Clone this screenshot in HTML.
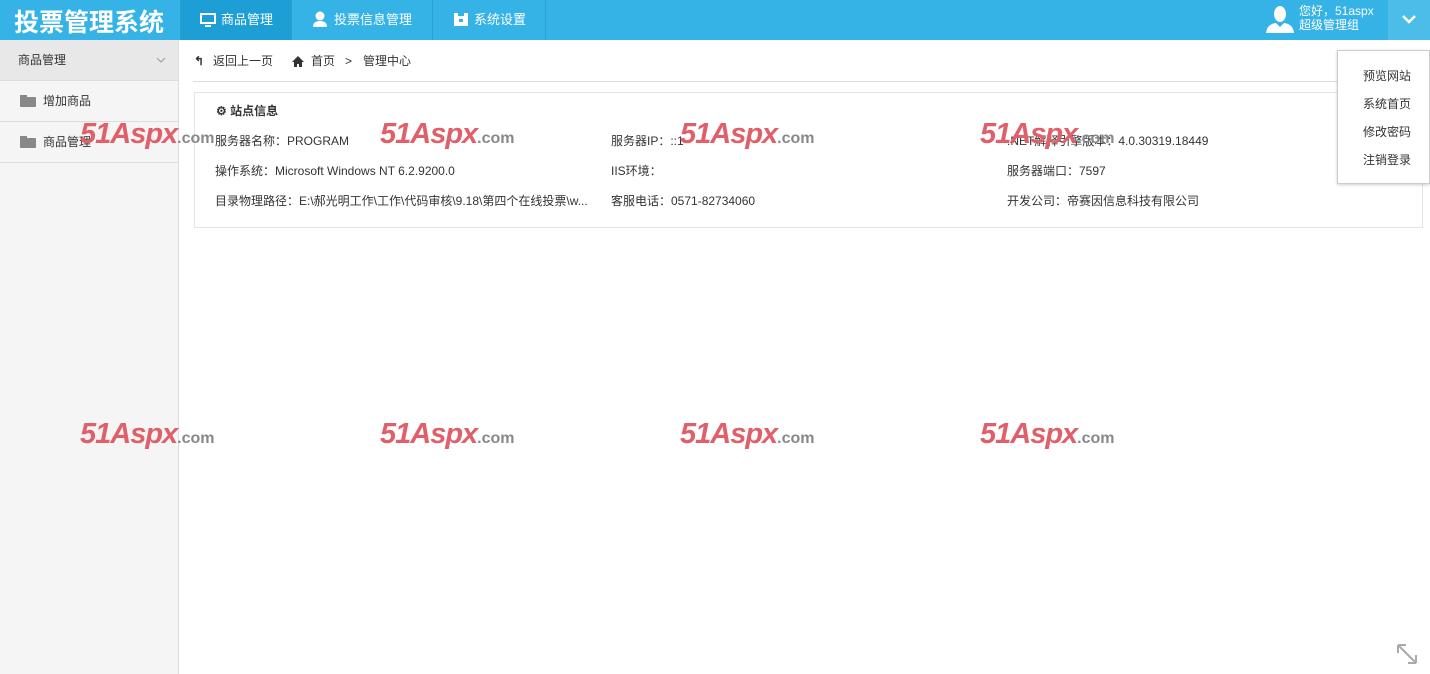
<!DOCTYPE html><html><head><meta charset="utf-8"><style>
*{margin:0;padding:0;box-sizing:border-box}
body{width:1430px;height:674px;overflow:hidden;font-family:"Liberation Sans","Noto Sans CJK SC",sans-serif;font-size:12px;color:#333;background:#fff;position:relative}
.top{position:absolute;left:0;top:0;width:1430px;height:40px;background:#35b3e6}
.logo{position:absolute;left:14px;top:3px;color:#fff;font-size:25px;font-weight:bold}
.tab{position:absolute;top:0;height:40px;color:#fff;font-size:13px;line-height:40px;border-right:1px solid #2aa0d2}
.side{position:absolute;left:0;top:40px;width:179px;height:634px;background:#f5f5f5;border-right:1px solid #ddd}
.sh{height:41px;background:#e8e8e8;border-bottom:1px solid #ddd;line-height:40px;padding-left:18px;position:relative}
.si{height:41px;border-bottom:1px solid #ddd;line-height:40px;padding-left:43px;position:relative}
.fold{position:absolute;left:20px;top:16px;width:16px;height:10px;background:#888;border-radius:1px}
.fold:before{content:"";position:absolute;left:0;top:-2px;width:7px;height:3px;background:#888}
.bc{position:absolute;left:193px;top:40px;width:1237px;height:42px;border-bottom:1px solid #ddd;line-height:42px}
.box{position:absolute;left:194px;top:92px;width:1229px;height:136px;border:1px solid #e5e5e5}
.t{position:absolute;white-space:nowrap}
.wm{position:absolute;font-size:29px;font-weight:bold;font-style:italic;color:#e0606a;white-space:nowrap;letter-spacing:-1px}
.wm span{font-size:16px;color:#888;font-style:normal;letter-spacing:0}
.menu{position:absolute;left:1337px;top:50px;width:93px;height:134px;background:#fff;border:1px solid #ccc;box-shadow:0 1px 3px rgba(0,0,0,.2)}
.menu div{position:absolute;left:25px}
</style></head><body>
<div class="top">
<div class="logo">投票管理系统</div>
<div class="tab" style="left:180px;width:112px;background:#1d9fd6;border-left:1px solid #2aa0d2;padding-left:40px"><svg style="position:absolute;left:19px;top:12px" width="16" height="16"><rect x="1" y="2" width="14" height="9" fill="none" stroke="#fff" stroke-width="2"/><rect x="5" y="13" width="6" height="2" fill="#fff"/></svg>商品管理</div>
<div class="tab" style="left:292px;width:141px;padding-left:42px"><svg style="position:absolute;left:20px;top:11px" width="16" height="17"><circle cx="8" cy="5" r="4.5" fill="#fff"/><path d="M1 16q0-6 7-6t7 6z" fill="#fff"/></svg>投票信息管理</div>
<div class="tab" style="left:433px;width:113px;padding-left:41px"><svg style="position:absolute;left:20px;top:12px" width="16" height="15"><path d="M1 1h4v3h6v-3h4v13h-14z" fill="#fff"/><rect x="6" y="7" width="4" height="3" fill="#35b3e6"/></svg>系统设置</div>
<svg style="position:absolute;left:1265px;top:4px" width="30" height="30"><ellipse cx="15" cy="10" rx="6" ry="8" fill="#fff"/><path d="M1 29q1-9 10-10l4 4 4-4q9 1 10 10z" fill="#fff"/></svg>
<div class="t" style="left:1299px;top:4px;color:#fff;font-size:12px;line-height:14px">您好，51aspx<br>超级管理组</div>
<div style="position:absolute;left:1388px;top:0;width:42px;height:40px;background:#4cbde9"><svg style="position:absolute;left:13px;top:13px" width="16" height="12"><path d="M2 3l6 6 6-6" fill="none" stroke="#fff" stroke-width="2.5"/></svg></div>
</div>
<div class="side">
<div class="sh">商品管理<svg style="position:absolute;left:156px;top:17px" width="10" height="7"><path d="M1 1l4 4 4-4" fill="none" stroke="#999"/></svg></div>
<div class="si"><i class="fold"></i>增加商品</div>
<div class="si"><i class="fold"></i>商品管理</div>
</div>
<div class="bc"><span style="position:absolute;left:1px;font-weight:bold">↰</span><span style="position:absolute;left:20px">返回上一页</span><svg style="position:absolute;left:99px;top:16px" width="12" height="11"><path d="M6 0l6 6h-2v5h-3v-3h-2v3h-3v-5h-2z" fill="#333"/></svg><span style="position:absolute;left:118px">首页</span><span style="position:absolute;left:152px">&gt;</span><span style="position:absolute;left:170px">管理中心</span></div>
<div class="box">
<div class="t" style="left:21px;top:9px;font-weight:bold">⚙ 站点信息</div>
<div class="t" style="left:20px;top:39px">服务器名称：PROGRAM</div>
<div class="t" style="left:20px;top:69px">操作系统：Microsoft Windows NT 6.2.9200.0</div>
<div class="t" style="left:20px;top:99px">目录物理路径：E:\郝光明工作\工作\代码审核\9.18\第四个在线投票\w...</div>
<div class="t" style="left:416px;top:39px">服务器IP：::1</div>
<div class="t" style="left:416px;top:69px">IIS环境：</div>
<div class="t" style="left:416px;top:99px">客服电话：0571-82734060</div>
<div class="t" style="left:812px;top:39px">.NET解释引擎版本：4.0.30319.18449</div>
<div class="t" style="left:812px;top:69px">服务器端口：7597</div>
<div class="t" style="left:812px;top:99px">开发公司：帝赛因信息科技有限公司</div>
</div>
<div class="wm" style="left:80px;top:118px">51Aspx<span>.com</span></div>
<div class="wm" style="left:380px;top:118px">51Aspx<span>.com</span></div>
<div class="wm" style="left:680px;top:118px">51Aspx<span>.com</span></div>
<div class="wm" style="left:980px;top:118px">51Aspx<span>.com</span></div>
<div class="wm" style="left:80px;top:418px">51Aspx<span>.com</span></div>
<div class="wm" style="left:380px;top:418px">51Aspx<span>.com</span></div>
<div class="wm" style="left:680px;top:418px">51Aspx<span>.com</span></div>
<div class="wm" style="left:980px;top:418px">51Aspx<span>.com</span></div>
<div class="menu"><div style="top:16px">预览网站</div><div style="top:44px">系统首页</div><div style="top:72px">修改密码</div><div style="top:100px">注销登录</div></div>
<svg style="position:absolute;left:1396px;top:643px" width="22" height="22"><path d="M2 2h8M2 2v8M2 2l18 18M20 20h-8M20 20v-8" fill="none" stroke="#aaa" stroke-width="2"/></svg>
</body></html>
